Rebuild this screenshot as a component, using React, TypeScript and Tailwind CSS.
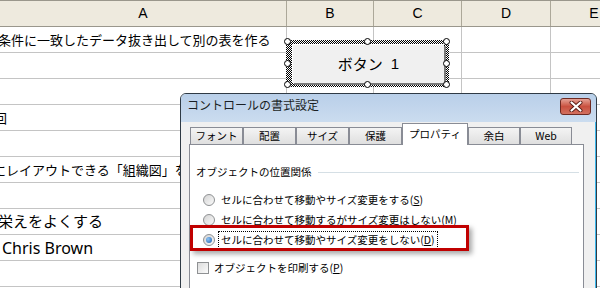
import React from 'react';

const jp = "font-['Noto_Sans_CJK_JP',sans-serif]";

const cols = [
  { key: 'A', w: 'w-[287px]' },
  { key: 'B', w: 'w-[87px]' },
  { key: 'C', w: 'w-[88px]' },
  { key: 'D', w: 'w-[89px]' },
  { key: 'E', w: 'w-[87px]' },
];

const rowsA: (React.ReactNode | null)[] = [
  <span className={`${jp} text-[13px] ml-[-2px]`}>条件に一致したデータ抜き出して別の表を作る</span>,
  null,
  null,
  <span className={`${jp} text-[13px] ml-[-6px]`}>回</span>,
  null,
  <span className={`${jp} text-[13px] ml-[-7px]`}>にレイアウトできる「組織図」をつくる</span>,
  null,
  <span className={`${jp} text-[15px] ml-[-17px]`}>見栄えをよくする</span>,
  <span className="font-['Noto_Sans',sans-serif] text-[16px] ml-[2px]">Chris Brown</span>,
  null,
];

const Handle = ({ pos }: { pos: string }) => (
  <div className={`absolute ${pos} w-[7px] h-[7px] rounded-full bg-white border border-black`} />
);

const Radio = ({ checked }: { checked?: boolean }) => (
  <div className="w-[12px] h-[12px] rounded-full border border-[#8f9193] bg-gradient-to-br from-[#d4d4d4] to-[#fbfbfb] flex items-center justify-center shrink-0">
    {checked && (
      <div className="w-[6px] h-[6px] rounded-full bg-[radial-gradient(circle_at_35%_35%,#8cc4f5,#1f5fae)]" />
    )}
  </div>
);

const Tab = ({ label, w, active }: { label: string; w: string; active?: boolean }) =>
  active ? (
    <div className={`${w} h-[22px] bg-white border border-[#898c95] border-b-0 relative z-10 mb-[-1px] flex items-start justify-center pt-[2px] text-[10.5px] leading-[16px]`}>
      {label}
    </div>
  ) : (
    <div className={`${w} h-[17px] border border-[#898c95] border-b-0 bg-gradient-to-b from-[#f4f4f4] to-[#dfdfdf] flex items-center justify-center text-[10.5px] leading-[14px]`}>
      {label}
    </div>
  );

export default function App() {
  return (
    <div className="relative w-[600px] h-[288px] overflow-hidden bg-white text-black">
      {/* column header */}
      <div className="flex h-[27px] bg-[#eeeade] border-t border-b border-[#9a978c]">
        {cols.map((c) => (
          <div
            key={c.key}
            className={`${c.w} shrink-0 border-r border-[#aca899] flex items-center justify-center font-['Liberation_Sans',sans-serif] text-[14px]`}
          >
            {c.key}
          </div>
        ))}
      </div>

      {/* sheet rows */}
      {rowsA.map((content, i) => (
        <div key={i} className="flex h-[26px]">
          {cols.map((c, j) => (
            <div
              key={c.key}
              className={`${c.w} shrink-0 border-r border-b border-[#c4c4c4] flex items-center overflow-hidden whitespace-nowrap`}
            >
              {j === 0 ? content : null}
            </div>
          ))}
        </div>
      ))}

      {/* selected form button */}
      <div className="absolute left-[286px] top-[40px] w-[163px] h-[47px] bg-[repeating-conic-gradient(#000_0%_25%,#fff_0%_50%)] bg-[length:2px_2px] pt-[4px] pb-[4px] pl-[6px] pr-[5px]">
        <div className="w-full h-full bg-[#f0f0f0] border-t border-l border-[#ffffff] shadow-[2px_2px_0_#7a7a7a] flex items-center justify-center">
          <span className={`${jp} text-[15px]`}>ボタン</span>
          <span className="font-['Liberation_Sans',sans-serif] text-[15px] ml-[8px]">1</span>
        </div>
        <Handle pos="left-[-2px] top-[-2px]" />
        <Handle pos="left-[78px] top-[-2px]" />
        <Handle pos="left-[157px] top-[-2px]" />
        <Handle pos="left-[-2px] top-[20px]" />
        <Handle pos="left-[157px] top-[20px]" />
        <Handle pos="left-[-2px] top-[41px]" />
        <Handle pos="left-[78px] top-[41px]" />
        <Handle pos="left-[157px] top-[41px]" />
      </div>

      {/* dialog */}
      <div className={`absolute left-[180px] top-[93px] w-[417px] h-[210px] rounded-t-[6px] border border-[#2f3a45] bg-[#f0f0f0] overflow-hidden shadow-[inset_-1px_0_0_#3bb8ec] ${jp}`}>
        <div className="h-[28px] bg-gradient-to-b from-[#b9cfe9] to-[#cbdcef] flex justify-between items-start">
          <div className="pl-[6px] pt-[3px] text-[12px] leading-[16px] text-[#1b1f24]">コントロールの書式設定</div>
          <div className="mt-[4px] mr-[5px] w-[31px] h-[17px] rounded-[3px] border border-[#6e2a22] bg-gradient-to-b from-[#e4a196] via-[#c9503f] to-[#d2705f] flex items-center justify-center">
            <svg width="14" height="11" viewBox="0 0 14 11">
              <path d="M2.5 1.5 L11.5 9.5 M11.5 1.5 L2.5 9.5" stroke="#5a1d16" strokeWidth="4" strokeLinecap="round" />
              <path d="M2.5 1.5 L11.5 9.5 M11.5 1.5 L2.5 9.5" stroke="#ffffff" strokeWidth="2.2" strokeLinecap="round" />
            </svg>
          </div>
        </div>

        <div className="pl-[8px]">
          <div className="flex items-end h-[22px] pl-[1px]">
            <Tab label="フォント" w="w-[53px]" />
            <Tab label="配置" w="w-[53px]" />
            <Tab label="サイズ" w="w-[53px]" />
            <Tab label="保護" w="w-[53px]" />
            <Tab label="プロパティ" w="w-[66px]" active />
            <Tab label="余白" w="w-[52px]" />
            <Tab label="Web" w="w-[52px]" />
          </div>

          <div className="relative w-[395px] h-[160px] bg-white border border-[#898c95]">
            <div className="flex items-center mt-[20px] pl-[6px] pr-[4px] gap-[6px]">
              <span className="text-[10.5px] leading-[14px]">オブジェクトの位置関係</span>
              <div className="flex-1 h-px bg-[#d5dfe5]" />
            </div>

            <div className="mt-[11px]">
              <div className="flex items-center h-[20px] pl-[13px] gap-[6px]">
                <Radio />
                <span className="text-[10.5px] leading-[14px]">
                  セルに合わせて移動やサイズ変更をする(<span className="underline">S</span>)
                </span>
              </div>
              <div className="flex items-center h-[20px] pl-[13px] gap-[6px]">
                <Radio />
                <span className="text-[10.5px] leading-[14px]">
                  セルに合わせて移動するがサイズ変更はしない(<span className="underline">M</span>)
                </span>
              </div>
              <div className="flex items-center h-[20px] pl-[13px] gap-[3px]">
                <Radio checked />
                <span className="text-[10.5px] leading-[14px] border border-dotted border-black px-[2px] py-[1px]">
                  セルに合わせて移動やサイズ変更をしない(<span className="underline">D</span>)
                </span>
              </div>
            </div>

            <div className="flex items-center h-[20px] mt-[8px] pl-[7px] gap-[5px]">
              <div className="w-[12px] h-[12px] border border-[#8f9193] bg-gradient-to-br from-[#dcdcdc] to-[#fbfbfb] shrink-0" />
              <span className="text-[10.5px] leading-[14px]">
                オブジェクトを印刷する(<span className="underline">P</span>)
              </span>
            </div>

            {/* highlight annotation */}
            <div className="absolute left-[0px] top-[80px] w-[279px] h-[26px] border-[3px] border-[#c00000] shadow-[3px_3px_5px_rgba(0,0,0,0.35)]" />
          </div>
        </div>
      </div>
    </div>
  );
}
